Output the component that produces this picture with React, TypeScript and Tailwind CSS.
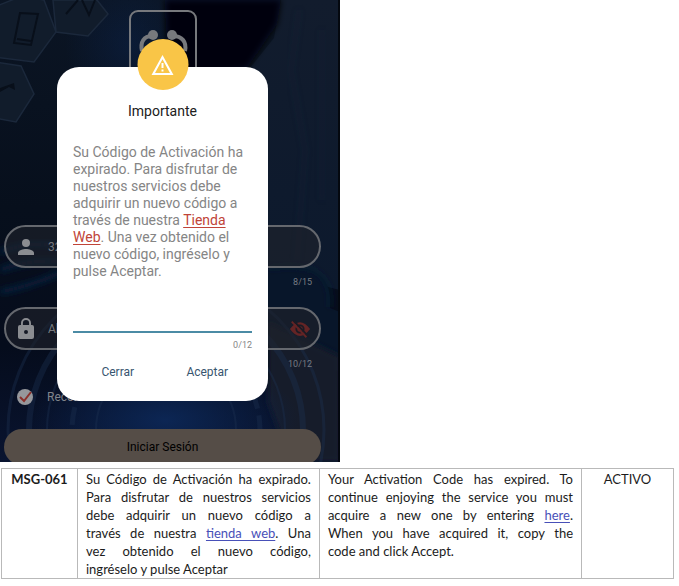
import React from "react";

function Backdrop() {
  return (
    <svg className="absolute inset-0 h-full w-full" viewBox="0 0 340 462" preserveAspectRatio="none" aria-hidden="true">
      <defs>
        <linearGradient id="night" x1="0" y1="0" x2="0" y2="1">
          <stop offset="0" stopColor="#0b1524" />
          <stop offset="0.45" stopColor="#070f1c" />
          <stop offset="0.75" stopColor="#050c1c" />
          <stop offset="1" stopColor="#091430" />
        </linearGradient>
        <radialGradient id="glow">
          <stop offset="0" stopColor="#0c2654" />
          <stop offset="1" stopColor="#0c2654" stopOpacity="0" />
        </radialGradient>
        <linearGradient id="suit" x1="0" y1="0" x2="0" y2="1">
          <stop offset="0" stopColor="#121c2d" />
          <stop offset="1" stopColor="#0c192d" />
        </linearGradient>
        <filter id="soft">
          <feGaussianBlur stdDeviation="3" />
        </filter>
      </defs>
      <rect width="340" height="462" fill="url(#night)" />
      <ellipse cx="130" cy="45" rx="65" ry="75" fill="url(#glow)" opacity="0.4" />
      <path d="M281 0h59v290l-78-20-12-202 24-30z" fill="url(#suit)" />
      <path d="M165 0h116l-4 24-30 44-80 10z" fill="#03060d" filter="url(#soft)" />
      <path d="M299 10l-8 60 14 80-8 110M322 30v170" fill="none" stroke="#1d2a40" strokeWidth="2" opacity="0.4" filter="url(#soft)" />
      <g fill="#111c2b" stroke="#1b283b" strokeWidth="1.500">
        <path d="M-8 8l30-12 22 4 12 32-22 30-40-5z" />
        <path d="M53 0h44l11 14-20 22-32-4z" />
        <path d="M-5 62l26 4 13 28-18 28-21-4z" />
      </g>
      <g fill="none" stroke="#080f1a" strokeWidth="2">
        <path d="M20 13l18 1-7 31-17-2z" />
        <path d="M17 39l14 2" />
        <path d="M66 14l12-14M82 0l7 15 6-15" />
      </g>
      <path d="M0 88l14-5 1 7-6-3-9 5z" fill="#080f1a" />
      <path d="M0 252q34-12 62-6M0 270q34-12 62-8M0 292q32-6 62-20" fill="none" stroke="#0b2140" strokeWidth="5" filter="url(#soft)" />
      <path d="M268 270q36-6 50 4t12 34l10 4v60l-72-26z" fill="#08162a" />
      <path d="M268 268q36-6 50 5t12 34" fill="none" stroke="#142238" strokeWidth="2" filter="url(#soft)" />
      <path d="M268 322l72 34v106h-50l-22-60z" fill="#141a2a" filter="url(#soft)" />
      <ellipse cx="165" cy="420" rx="135" ry="62" fill="url(#glow)" />
      <g fill="none" stroke="#1c3050" opacity="0.4">
        <circle cx="166" cy="430" r="158" strokeWidth="3" />
        <circle cx="166" cy="430" r="137" strokeWidth="6" />
        <circle cx="166" cy="430" r="119" strokeWidth="2" />
        <circle cx="166" cy="430" r="94" strokeWidth="5" strokeDasharray="18 7" />
        <circle cx="166" cy="430" r="70" strokeWidth="2" />
      </g>
      <path d="M339 0v462" stroke="#04080f" strokeWidth="2" />
    </svg>
  );
}

function Logo() {
  return (
    <svg width="68" height="80" viewBox="0 0 68 80" fill="none" stroke="#77797d" aria-hidden="true">
      <rect x="1" y="1" width="66" height="78" rx="8" strokeWidth="2" />
      <path d="M23 26C15 26 11 32 13 41M44 26C53 26 58 32 56 41" strokeWidth="4" />
      <circle cx="24" cy="25" r="5" fill="#77797d" stroke="none" />
      <circle cx="43" cy="25" r="5" fill="#77797d" stroke="none" />
    </svg>
  );
}

function Person() {
  return (
    <svg width="16" height="16" viewBox="4 4 16 16" fill="#8b8d91" aria-hidden="true" className="shrink-0">
      <circle cx="12" cy="8" r="4" />
      <path d="M4 20v-2c0-2.700 5.300-4 8-4s8 1.300 8 4v2z" />
    </svg>
  );
}

function Lock() {
  return (
    <svg width="16" height="21" viewBox="4 1 16 21" fill="#8b8d91" aria-hidden="true" className="shrink-0">
      <path d="M18 8h-1V6A5 5 0 0 0 7 6v2H6a2 2 0 0 0-2 2v10c0 1.100.9 2 2 2h12a2 2 0 0 0 2-2V10a2 2 0 0 0-2-2zm-6 9a2 2 0 1 1 0-4 2 2 0 0 1 0 4zm3.100-9H8.900V6a3.100 3.100 0 0 1 6.200 0z" />
    </svg>
  );
}

function HiddenEye() {
  return (
    <svg width="22" height="22" viewBox="0 0 24 24" aria-hidden="true">
      <path d="M1 12Q12-3 23 12 12 27 1 12z" fill="#642425" />
      <circle cx="12" cy="12" r="4" fill="none" stroke="#1b1b24" strokeWidth="2" />
      <path d="M5 3l16 17" stroke="#1b1b24" strokeWidth="2" />
      <path d="M3 4l16 17" stroke="#642425" strokeWidth="2" />
    </svg>
  );
}

const fieldBox = "flex h-[43px] items-center gap-3.5 rounded-full border-2 border-[#65686e] bg-[#20232b]/60 pr-2 pl-3";
const fieldInput = "min-w-0 flex-1 bg-transparent text-xs text-[#77797e] outline-none";
const counter = "h-[39px] pt-2 pr-[9px] text-right text-[9px] leading-[12px] text-[#777b82]";

function Login() {
  return (
    <form className="relative flex flex-col pt-2.5 pr-[19px] pl-1" onSubmit={(e) => e.preventDefault()}>
      <div className="flex h-[215px] justify-center">
        <Logo />
      </div>
      <div className={fieldBox}>
        <Person />
        <input aria-label="Usuario" className={fieldInput} defaultValue="32" />
      </div>
      <div className={counter}>8/15</div>
      <div className={fieldBox}>
        <Lock />
        <input aria-label="Contraseña" className={fieldInput} defaultValue="Al" />
        <button type="button" aria-label="Mostrar contraseña" className="shrink-0"><HiddenEye /></button>
      </div>
      <div className={counter}>10/12</div>
      <label className="flex h-4 items-center gap-3.5 pl-[13px] text-xs text-[#81848b]">
        <span className="relative block h-4 w-4 shrink-0">
          <input type="checkbox" defaultChecked className="block h-4 w-4 appearance-none rounded-full bg-[#96979b]" />
          <svg className="pointer-events-none absolute inset-0" width="16" height="16" viewBox="0 0 16 16" fill="none" stroke="#8b302b" strokeWidth="2" aria-hidden="true">
            <path d="M3 8l4 4 7-9" />
          </svg>
        </span>
        Recordar usuario
      </label>
      <button className="mt-6 -mb-[3px] h-9 rounded-full bg-[#554d47] text-xs text-black">Iniciar Sesión</button>
    </form>
  );
}

function Dialog() {
  return (
    <div role="dialog" aria-labelledby="dialog-title" className="absolute top-[67px] right-[72px] left-[57px] rounded-[22px] bg-white px-4 pb-5">
      <div className="absolute -top-7 left-1/2 flex h-[51px] w-[51px] -translate-x-1/2 items-center justify-center rounded-full bg-[#f9c547]">
        <svg width="24" height="24" viewBox="0 0 24 24" fill="#fff" aria-hidden="true">
          <path fillRule="evenodd" d="M1 22h22L12 2zM4.500 20L12 6.200 19.500 20z" />
          <path d="M11 10h2v5h-2zM11 16.500h2v2h-2z" />
        </svg>
      </div>
      <h2 id="dialog-title" className="pt-9 text-center text-sm leading-[17px] text-[#202020]">Importante</h2>
      <p className="mt-6 text-sm leading-[17px] text-[#858585]">
        Su Código de Activación ha expirado. Para disfrutar de nuestros servicios debe adquirir un nuevo código a través de nuestra{" "}
        <a href="#tienda" className="text-[#c04438] underline underline-offset-2">Tienda Web</a>. Una vez obtenido el nuevo código, ingréselo y pulse Aceptar.
      </p>
      <input aria-label="Código de activación" maxLength={12} className="mt-[23px] block h-[30px] w-full border-b-2 border-[#4b8ba5] bg-transparent text-sm outline-none" />
      <div className="mt-1.5 text-right text-[9px] leading-[12px] text-[#868686]">0/12</div>
      <div className="mt-3 grid grid-cols-2 text-xs leading-[18px] text-[#385570]">
        <button>Cerrar</button>
        <button>Aceptar</button>
      </div>
    </div>
  );
}

function Line({ children }: { children: React.ReactNode }) {
  return <span className="block [text-align-last:justify]">{children} </span>;
}

const tableLink = "text-[#4850b8] underline underline-offset-2";

export default function App() {
  return (
    <main className="min-h-screen bg-white">
      <section className="relative w-[340px] max-w-full overflow-hidden font-['Roboto',sans-serif]">
        <Backdrop />
        <Login />
        <Dialog />
      </section>
      <div className="mt-1.5 pr-[5px] pl-px">
        <table className="w-full table-fixed border-collapse font-['Lato',sans-serif] text-[13px] leading-[18px] text-[#1c1c1c] [&_td]:border [&_td]:border-[#b9b9b9] [&_td]:px-2 [&_td]:pt-px [&_th]:border [&_th]:border-[#b9b9b9] [&_th]:pt-px">
          <colgroup>
            <col className="w-[76px]" />
            <col className="w-[36%]" />
            <col className="w-[39%]" />
            <col className="w-[92px]" />
          </colgroup>
          <tbody>
            <tr className="align-top">
              <th scope="row" className="font-bold">MSG-061</th>
              <td className="text-justify">
                <Line>Su Código de Activación ha expirado.</Line>
                <Line>Para disfrutar de nuestros servicios</Line>
                <Line>debe adquirir un nuevo código a</Line>
                <Line>través de nuestra <a href="#tienda" className={tableLink}>tienda web</a>. Una</Line>
                <Line>vez obtenido el nuevo código,</Line>
                ingréselo y pulse Aceptar
              </td>
              <td className="text-justify">
                <Line>Your Activation Code has expired. To</Line>
                <Line>continue enjoying the service you must</Line>
                <Line>acquire a new one by entering <a href="#here" className={tableLink}>here</a>.</Line>
                <Line>When you have acquired it, copy the</Line>
                code and click Accept.
              </td>
              <td className="text-center">ACTIVO</td>
            </tr>
          </tbody>
        </table>
      </div>
    </main>
  );
}
